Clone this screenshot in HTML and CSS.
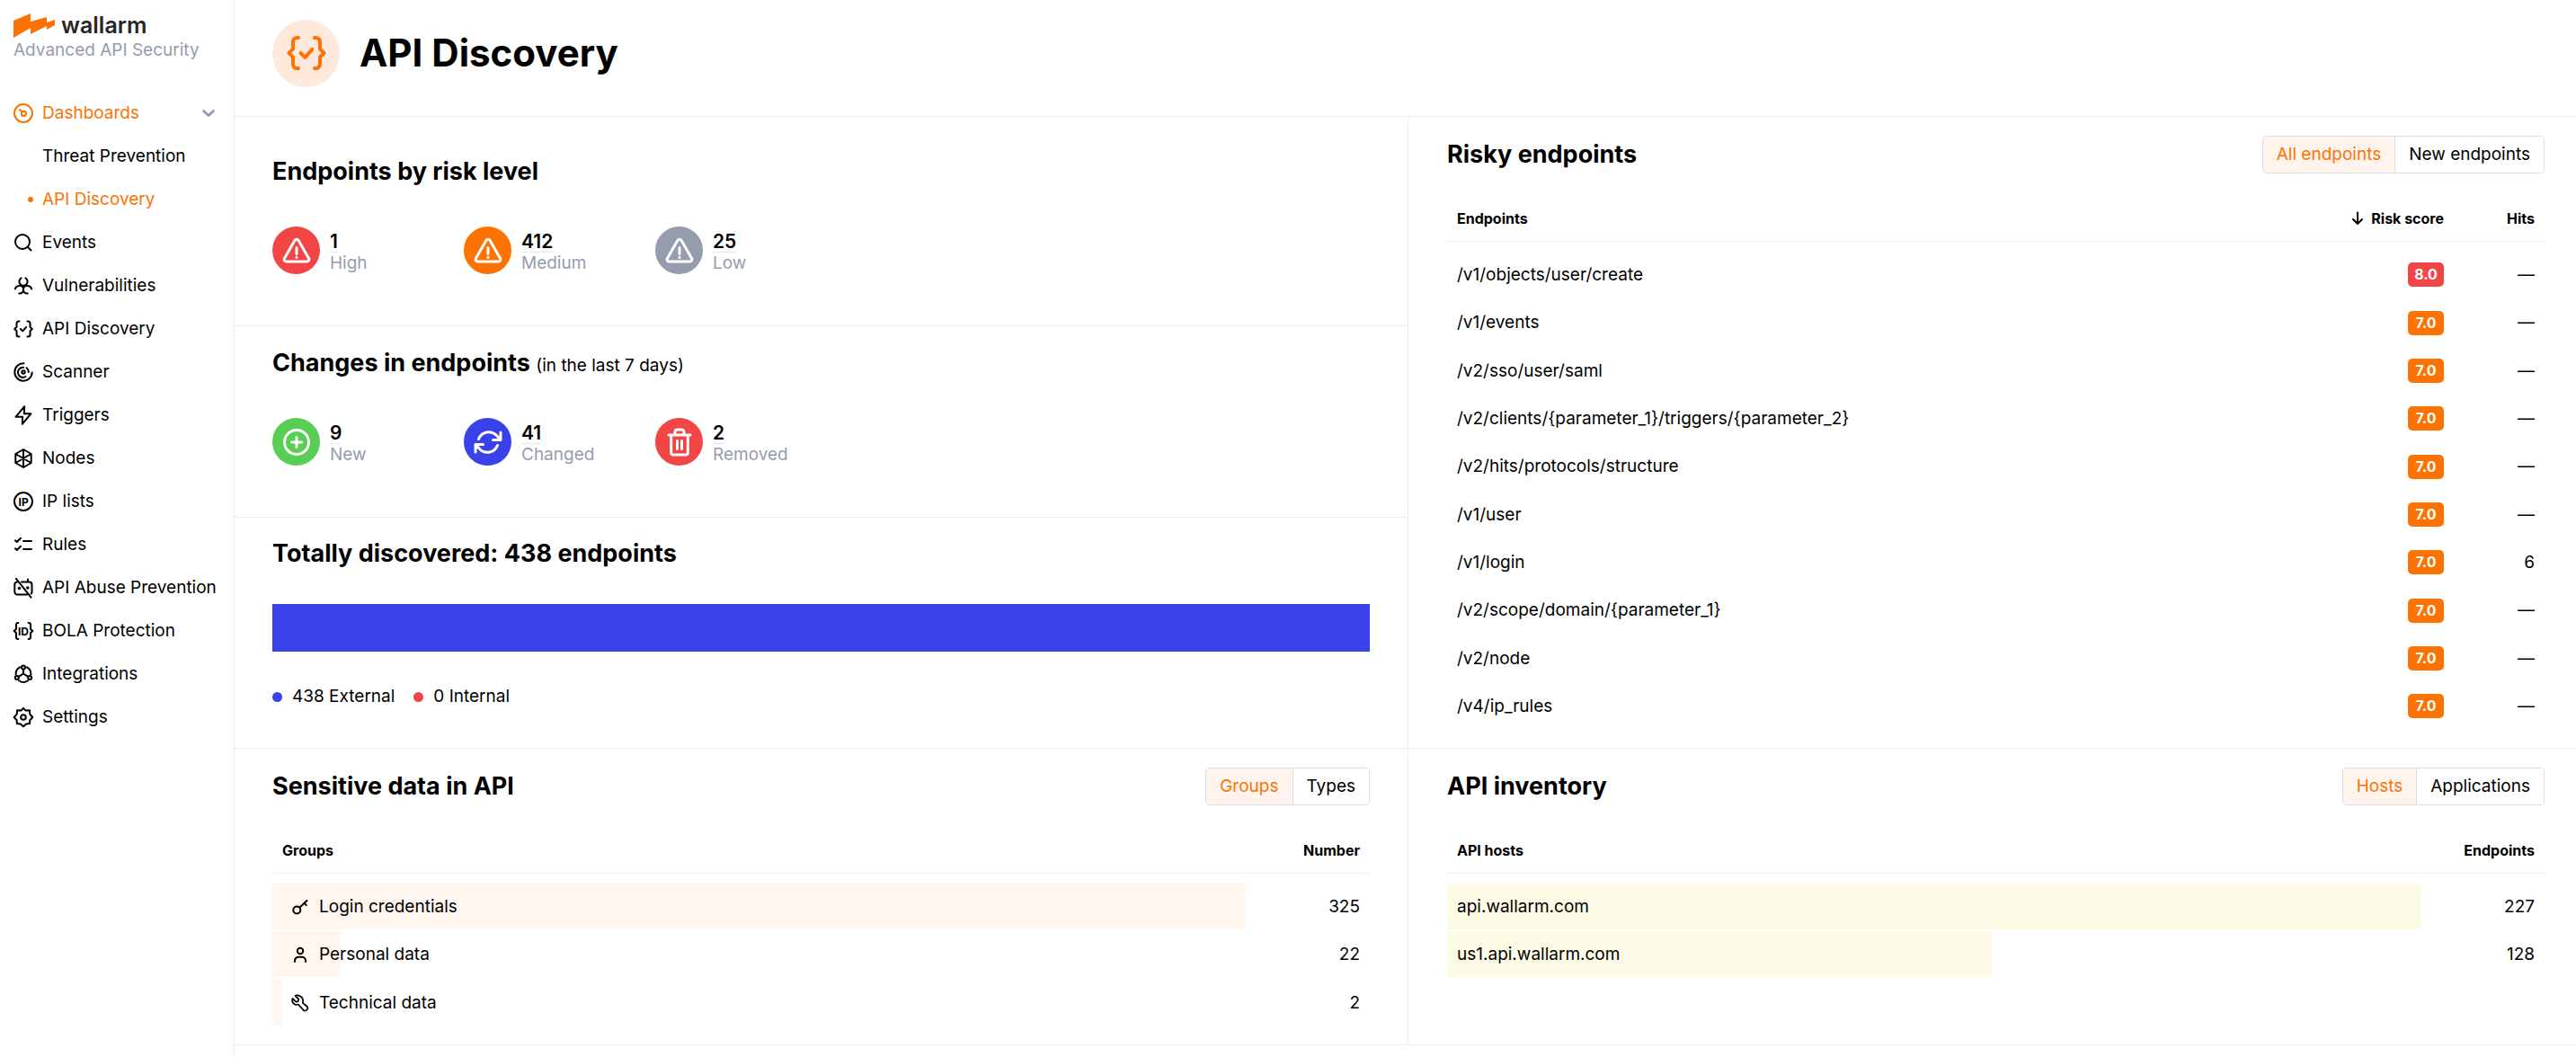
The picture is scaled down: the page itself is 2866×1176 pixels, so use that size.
FILE: index.html
```html
<!DOCTYPE html>
<html lang="en">
<head>
<meta charset="utf-8">
<title>API Discovery</title>
<link rel="stylesheet" href="styles.css">
</head>
<body>
<svg class="sprite" aria-hidden="true">
  <symbol id="i-dash" viewBox="0 0 24 24"><circle cx="12" cy="12" r="10"/><circle cx="12.400" cy="12.400" r="2.600"/><path d="M10.400 10.400 8 8"/></symbol>
  <symbol id="i-search" viewBox="0 0 24 24"><circle cx="11" cy="11" r="8"/><path d="m20.500 20.500-3.700-3.700"/></symbol>
  <symbol id="i-bio" viewBox="0 0 24 24"><path d="M9.600 3.300a4.600 4.600 0 1 0 4.800 0M2.800 15.600a4.900 4.900 0 0 1 9.200-.900 4.900 4.900 0 0 1 9.200.900M12 14.700v2M7.200 20.400c3 .300 4.800-1.400 4.800-4 0 2.600 1.800 4.300 4.800 4"/></symbol>
  <symbol id="i-api" viewBox="0 0 24 24"><path d="M7.500 3.500H6.700A2.200 2.200 0 0 0 4.500 5.700v4.100L2.200 12l2.300 2.200v4.100a2.200 2.200 0 0 0 2.200 2.200h.800M16.500 3.500h.800a2.200 2.200 0 0 1 2.200 2.200v4.100l2.300 2.200-2.300 2.200v4.100a2.200 2.200 0 0 1-2.200 2.200h-.800M8.800 12l2.400 2.400 4-4.500"/></symbol>
  <symbol id="i-scan" viewBox="0 0 24 24"><path d="M12.500 2.300A9.700 9.700 0 1 0 21.700 12.500M12 6.700A5.600 5.600 0 1 0 14.500 17M15.500 7.200A5.800 5.800 0 0 1 17.800 12"/><circle cx="12" cy="12" r="1.700"/></symbol>
  <symbol id="i-bolt" viewBox="0 0 24 24"><path d="M13.200 2.200 3.500 13.800h7.700L10.800 21.800 20.500 10.200h-7.700z"/></symbol>
  <symbol id="i-node" viewBox="0 0 24 24"><path d="m12 2 8.700 5v10L12 22l-8.700-5V7zM12 2v20M7 9l10 6M7 15l10-6M3.300 7l2 1.200M20.700 7l-2 1.200M3.300 17l2-1.200M20.700 17l-2-1.200"/></symbol>
  <symbol id="i-ip" viewBox="0 0 24 24"><circle cx="12" cy="12" r="10"/><text x="12.200" y="16.500">IP</text></symbol>
  <symbol id="i-rules" viewBox="0 0 24 24"><path d="m3 7.200 1.800 1.800L9 4.800M3 16.200l1.800 1.800L9 13.800M12 8h9M12 17h9"/></symbol>
  <symbol id="i-bot" viewBox="0 0 24 24"><path d="M10 5.500h8.500a3 3 0 0 1 3 3v8a3 3 0 0 1-.700 2M5 5.500a3 3 0 0 0-2.700 3v8a3 3 0 0 0 3 3H16M17 2.500v3M4 1.800l16.500 20.800"/><circle cx="7.500" cy="12.500" r=".8"/><circle cx="16.800" cy="12" r=".8"/></symbol>
  <symbol id="i-id" viewBox="0 0 24 24"><path d="M6.300 3h-.300a2 2 0 0 0-2 2v4.800L1.700 12l2.300 2.200v4.800a2 2 0 0 0 2 2h.300M17.700 3h.300a2 2 0 0 1 2 2v4.800l2.300 2.200-2.300 2.200v4.800a2 2 0 0 1-2 2h-.300"/><text x="12" y="16.500">ID</text></symbol>
  <symbol id="i-integr" viewBox="0 0 24 24"><circle cx="12" cy="4.500" r="2"/><circle cx="4.800" cy="16" r="2"/><circle cx="19.200" cy="16" r="2"/><path d="M12 6.500v5l-5.300 3.400M12 11.500l5.300 3.400M8 4.300a8.500 8.500 0 0 0-4.300 8.200M16 4.300a8.500 8.500 0 0 1 4.300 8.200M7 19.200a8.300 8.300 0 0 0 10 0"/></symbol>
  <symbol id="i-gear" viewBox="0 0 24 24"><path d="M12 1.800 14.500 4.600 18.900 4.200 19.300 8.600 22.300 12 19.300 15.200 19.100 19.100 15.100 19.400 12 22.200 8.900 19.400 4.900 19.100 4.700 15.200 1.700 12 4.700 8.600 5.100 4.200 9.500 4.600z"/><circle cx="12" cy="12" r="2.800"/></symbol>
  <symbol id="i-chev" viewBox="0 0 16 16"><path d="m2.500 5.500 5.500 5 5.500-5"/></symbol>
  <symbol id="i-warn" viewBox="0 0 32 32"><path d="M14 4.300 2.600 24.200A2.400 2.400 0 0 0 4.700 28h22.600a2.400 2.400 0 0 0 2.100-3.800L18 4.300a2.400 2.400 0 0 0-4 0zM16 12.500v7M16 23.200v.300"/></symbol>
  <symbol id="i-plus" viewBox="0 0 32 32"><circle cx="16" cy="16" r="13.500"/><path d="M16 10.500v11M10.500 16h11"/></symbol>
  <symbol id="i-sync" viewBox="0 0 32 32"><path d="M30 5v8.500h-8.500M2 27v-8.500h8.500M5.500 12.500A12 12 0 0 1 25 8l5 5.500M26.500 19.500A12 12 0 0 1 7 24l-5-5.500"/></symbol>
  <symbol id="i-trash" viewBox="0 0 32 32"><path d="M4 8h24M25.300 8v19.500a2.500 2.500 0 0 1-2.500 2.500H9.200a2.500 2.500 0 0 1-2.500-2.500V8M11 8V4.500A2.500 2.500 0 0 1 13.500 2h5A2.500 2.500 0 0 1 21 4.500V8M13.500 14.500v9M18.500 14.500v9"/></symbol>
  <symbol id="i-key" viewBox="0 0 20 20"><circle cx="6.300" cy="13.500" r="4"/><path d="m9.500 10.500 8-7.500M14.500 5.800l2.300 2.300"/></symbol>
  <symbol id="i-user" viewBox="0 0 20 20"><circle cx="10" cy="6" r="3.200"/><path d="M4 18v-1.200a4 4 0 0 1 4-4h4a4 4 0 0 1 4 4V18"/></symbol>
  <symbol id="i-tool" viewBox="0 0 20 20"><path stroke-width="1.700" d="m4.500 1.800 3.800 3.800-.700 2.500-2.300.500L1.500 4.800C.600 7.500 1.600 10 3.600 11.200c1.600.900 3 .700 4.200.3l6.400 6.900 2 .100 2.200-2.200-.200-1.800-5.500-4.800c1-3-.100-5.700-2.500-7.200-1.700-1-4-1.300-5.700-.7z"/></symbol>
  <symbol id="i-down" viewBox="0 0 14 16"><path d="M7 1.500v12M2 9l5 5 5-5"/></symbol>
</svg>
<div class="app">
  <aside class="sidebar">
    <a class="brand" href="#">
      <svg class="brand-mark" viewBox="0 0 46 27"><path d="M0 8 19 0v9l18-5v6l9-3v6l-9 5v-4L19 23v-7L0 27z"/></svg>
      <span class="brand-name">wallarm</span>
    </a>
    <div class="tagline">Advanced API Security</div>
    <nav class="nav">
      <a class="nav-item active" href="#"><svg class="icon"><use href="#i-dash"/></svg><span class="nav-text">Dashboards</span><svg class="chevron"><use href="#i-chev"/></svg></a>
      <a class="nav-item sub" href="#">Threat Prevention</a>
      <a class="nav-item sub active current" href="#">API Discovery</a>
      <a class="nav-item" href="#"><svg class="icon"><use href="#i-search"/></svg>Events</a>
      <a class="nav-item" href="#"><svg class="icon"><use href="#i-bio"/></svg>Vulnerabilities</a>
      <a class="nav-item" href="#"><svg class="icon"><use href="#i-api"/></svg>API Discovery</a>
      <a class="nav-item" href="#"><svg class="icon"><use href="#i-scan"/></svg>Scanner</a>
      <a class="nav-item" href="#"><svg class="icon"><use href="#i-bolt"/></svg>Triggers</a>
      <a class="nav-item" href="#"><svg class="icon"><use href="#i-node"/></svg>Nodes</a>
      <a class="nav-item" href="#"><svg class="icon"><use href="#i-ip"/></svg>IP lists</a>
      <a class="nav-item" href="#"><svg class="icon"><use href="#i-rules"/></svg>Rules</a>
      <a class="nav-item" href="#"><svg class="icon"><use href="#i-bot"/></svg>API Abuse Prevention</a>
      <a class="nav-item" href="#"><svg class="icon"><use href="#i-id"/></svg>BOLA Protection</a>
      <a class="nav-item" href="#"><svg class="icon"><use href="#i-integr"/></svg>Integrations</a>
      <a class="nav-item" href="#"><svg class="icon"><use href="#i-gear"/></svg>Settings</a>
    </nav>
  </aside>
  <main class="main">
    <header class="page-head">
      <span class="page-icon"><svg><use href="#i-api"/></svg></span>
      <h1>API Discovery</h1>
    </header>
    <div class="grid">
      <div class="summary">
        <section class="card risk">
          <h2>Endpoints by risk level</h2>
          <div class="stats">
            <div class="stat"><span class="disc red"><svg><use href="#i-warn"/></svg></span><div><a class="num" href="#">1</a><div class="label">High</div></div></div>
            <div class="stat"><span class="disc orange"><svg><use href="#i-warn"/></svg></span><div><a class="num" href="#">412</a><div class="label">Medium</div></div></div>
            <div class="stat"><span class="disc gray"><svg><use href="#i-warn"/></svg></span><div><a class="num" href="#">25</a><div class="label">Low</div></div></div>
          </div>
        </section>
        <section class="card">
          <h2>Changes in endpoints <small>(in the last 7 days)</small></h2>
          <div class="stats">
            <div class="stat"><span class="disc green"><svg><use href="#i-plus"/></svg></span><div><a class="num" href="#">9</a><div class="label">New</div></div></div>
            <div class="stat"><span class="disc blue"><svg><use href="#i-sync"/></svg></span><div><a class="num" href="#">41</a><div class="label">Changed</div></div></div>
            <div class="stat"><span class="disc red"><svg><use href="#i-trash"/></svg></span><div><a class="num" href="#">2</a><div class="label">Removed</div></div></div>
          </div>
        </section>
        <section class="card total">
          <h2>Totally discovered: 438 endpoints</h2>
          <div class="total-bar"></div>
          <ul class="legend"><li><i class="dot blue"></i>438 External</li><li><i class="dot red"></i>0 Internal</li></ul>
        </section>
      </div>
      <section class="card panel side">
        <div class="panel-head"><h2>Risky endpoints</h2><div class="toggle"><button class="on">All endpoints</button><button>New endpoints</button></div></div>
        <table class="risky">
          <thead><tr><th>Endpoints</th><th class="score"><svg class="sort"><use href="#i-down"/></svg>Risk score</th><th class="hits">Hits</th></tr></thead>
          <tbody>
            <tr><td>/v1/objects/user/create</td><td><span class="badge red">8.0</span></td><td>—</td></tr>
            <tr><td>/v1/events</td><td><span class="badge orange">7.0</span></td><td>—</td></tr>
            <tr><td>/v2/sso/user/saml</td><td><span class="badge orange">7.0</span></td><td>—</td></tr>
            <tr><td>/v2/clients/{parameter_1}/triggers/{parameter_2}</td><td><span class="badge orange">7.0</span></td><td>—</td></tr>
            <tr><td>/v2/hits/protocols/structure</td><td><span class="badge orange">7.0</span></td><td>—</td></tr>
            <tr><td>/v1/user</td><td><span class="badge orange">7.0</span></td><td>—</td></tr>
            <tr><td>/v1/login</td><td><span class="badge orange">7.0</span></td><td>6</td></tr>
            <tr><td>/v2/scope/domain/{parameter_1}</td><td><span class="badge orange">7.0</span></td><td>—</td></tr>
            <tr><td>/v2/node</td><td><span class="badge orange">7.0</span></td><td>—</td></tr>
            <tr><td>/v4/ip_rules</td><td><span class="badge orange">7.0</span></td><td>—</td></tr>
          </tbody>
        </table>
      </section>
      <section class="card panel">
        <div class="panel-head"><h2>Sensitive data in API</h2><div class="toggle"><button class="on">Groups</button><button>Types</button></div></div>
        <table class="bars peach">
          <thead><tr><th>Groups</th><th class="count">Number</th></tr></thead>
          <tbody>
            <tr><td style="--share: 100%"><span class="group"><svg><use href="#i-key"/></svg>Login credentials</span></td><td>325</td></tr>
            <tr><td style="--share: 7%"><span class="group"><svg><use href="#i-user"/></svg>Personal data</span></td><td>22</td></tr>
            <tr><td style="--share: 1%"><span class="group"><svg><use href="#i-tool"/></svg>Technical data</span></td><td>2</td></tr>
          </tbody>
        </table>
      </section>
      <section class="card panel side">
        <div class="panel-head"><h2>API inventory</h2><div class="toggle"><button class="on">Hosts</button><button>Applications</button></div></div>
        <table class="bars lemon">
          <thead><tr><th>API hosts</th><th class="count">Endpoints</th></tr></thead>
          <tbody>
            <tr><td style="--share: 100%">api.wallarm.com</td><td>227</td></tr>
            <tr><td style="--share: 56%">us1.api.wallarm.com</td><td>128</td></tr>
          </tbody>
        </table>
      </section>
    </div>
  </main>
</div>
</body>
</html>
```
FILE: styles.css
```css
:root {
  --orange: #fc7303;
  --red: #f24545;
  --blue: #3841ea;
  --green: #59ce54;
  --gray: #959cae;
  --line: #ecedf0;
}
* { box-sizing: border-box; }
body {
  margin: 0;
  background: #fff;
  color: #000;
  font: 19px/24px Inter, "Liberation Sans", sans-serif;
}
a { color: inherit; text-decoration: none; }
svg { fill: none; stroke: currentColor; stroke-width: 2; stroke-linecap: round; stroke-linejoin: round; flex: none; }
svg text { font: 700 12px Inter, sans-serif; text-anchor: middle; fill: currentColor; stroke: none; }
.sprite { display: none; }
.app { display: flex; min-height: 100vh; }

.sidebar { width: 261px; flex: none; border-right: 1px solid var(--line); padding-top: 12px; }
.brand { display: flex; align-items: center; gap: 7px; height: 32px; padding-left: 15px; }
.brand-mark { width: 46px; height: 27px; fill: var(--orange); stroke: none; }
.brand-name { font-size: 25px; font-weight: 600; line-height: 32px; color: #262626; }
.tagline { padding-left: 15px; color: var(--gray); }
.nav { display: flex; flex-direction: column; margin-top: 34px; }
.nav-item { display: flex; align-items: center; gap: 9px; height: 48px; padding: 0 20px 0 14px; white-space: nowrap; }
.nav-item .icon { width: 24px; height: 24px; }
.nav-item .nav-text { flex: 1; }
.chevron { width: 16px; height: 16px; color: var(--gray); stroke-width: 3; }
.nav-item.sub { padding-left: 47px; }
.nav-item.active { color: var(--orange); }
.nav-item.current { padding-left: 31px; gap: 10px; }
.nav-item.current::before { content: ""; width: 6px; height: 6px; border-radius: 50%; background: currentColor; }

.main { flex: 1; min-width: 0; }
.page-head { display: flex; align-items: center; gap: 22px; height: 130px; padding: 0 42px 11px; border-bottom: 1px solid var(--line); }
.page-icon { display: flex; align-items: center; justify-content: center; width: 75px; height: 75px; border-radius: 50%; background: #ffe8dc; color: var(--orange); }
.page-icon svg { width: 48px; height: 48px; }
h1 { margin: 0; font-size: 42px; line-height: 52px; font-weight: 700; }
h2 { margin: 0; font-size: 27px; line-height: 42px; font-weight: 700; }
h2 small { font-size: 19px; line-height: 24px; font-weight: 400; }

.grid { display: grid; grid-template-columns: 1306fr 1299fr; }
.summary { border-right: 1px solid var(--line); }
.card { padding: 20px 42px; border-bottom: 1px solid var(--line); }
.card.panel { padding: 21px 42px 19px; border-right: 1px solid var(--line); }
.card.side { padding-left: 43px; padding-right: 35px; border-right: 0; }
.card.risk { padding-top: 40px; }
.stats { display: flex; margin-top: 40px; padding-bottom: 37px; }
.stat { display: flex; gap: 11px; width: 213px; height: 53px; }
.disc { display: flex; align-items: center; justify-content: center; width: 53px; height: 53px; border-radius: 50%; color: #fff; }
.disc svg { width: 32px; height: 32px; stroke-width: 3; }
.red { background: var(--red); }
.orange { background: var(--orange); }
.gray { background: var(--gray); }
.green { background: var(--green); }
.blue { background: var(--blue); }
.num { display: block; width: max-content; margin-top: 5px; font-size: 21px; font-weight: 600; line-height: 23px; border-bottom: 1px solid #e6e8ec; }
.label { color: var(--gray); }
.total { padding-top: 19px; }
.total-bar { height: 53px; margin-top: 35px; background: var(--blue); }
.legend { display: flex; gap: 21px; margin: 38px 0 0; padding: 0 0 25px; list-style: none; }
.legend li { display: flex; align-items: center; gap: 11px; }
.dot { width: 11px; height: 11px; border-radius: 50%; }

.panel-head { display: flex; justify-content: space-between; }
.toggle { display: flex; height: 42px; border: 1px solid #d8dde6; border-radius: 5px; overflow: hidden; }
.toggle button { margin: 0; padding: 0 15px; border: 0; background: #fff; color: #000; font: inherit; }
.toggle .on { background: #fff3ee; color: var(--orange); border-right: 1px solid #d8dde6; }
table { width: 100%; margin-top: 24px; border-collapse: separate; border-spacing: 0; table-layout: fixed; }
th { height: 52px; padding: 0 11px; border-bottom: 1px solid var(--line); font-size: 16px; font-weight: 700; text-align: left; }
tbody::before { content: ""; display: table-row; height: 11px; }
td { height: 53px; padding: 0 11px 2px; }
tr:nth-child(3n + 2) td { height: 54px; }
th + th, td + td { text-align: right; }
.score { width: 190px; }
.hits { width: 101px; }
.sort { width: 14px; height: 16px; margin-right: 8px; vertical-align: -2px; }
.badge { display: inline-block; width: 40px; height: 27px; border-radius: 5px; color: #fff; font-size: 16px; font-weight: 700; line-height: 27px; text-align: center; vertical-align: middle; }
.count { width: 138px; }
.bars td:first-child { background-size: var(--share) 51px; background-repeat: no-repeat; }
.peach td:first-child { background-image: linear-gradient(#fff6f0, #fff6f0); }
.lemon td:first-child { background-image: linear-gradient(#fdfbe6, #fdfbe6); }
.group { display: flex; align-items: center; gap: 11px; padding-left: 10px; }
.group svg { width: 20px; height: 20px; }
```
